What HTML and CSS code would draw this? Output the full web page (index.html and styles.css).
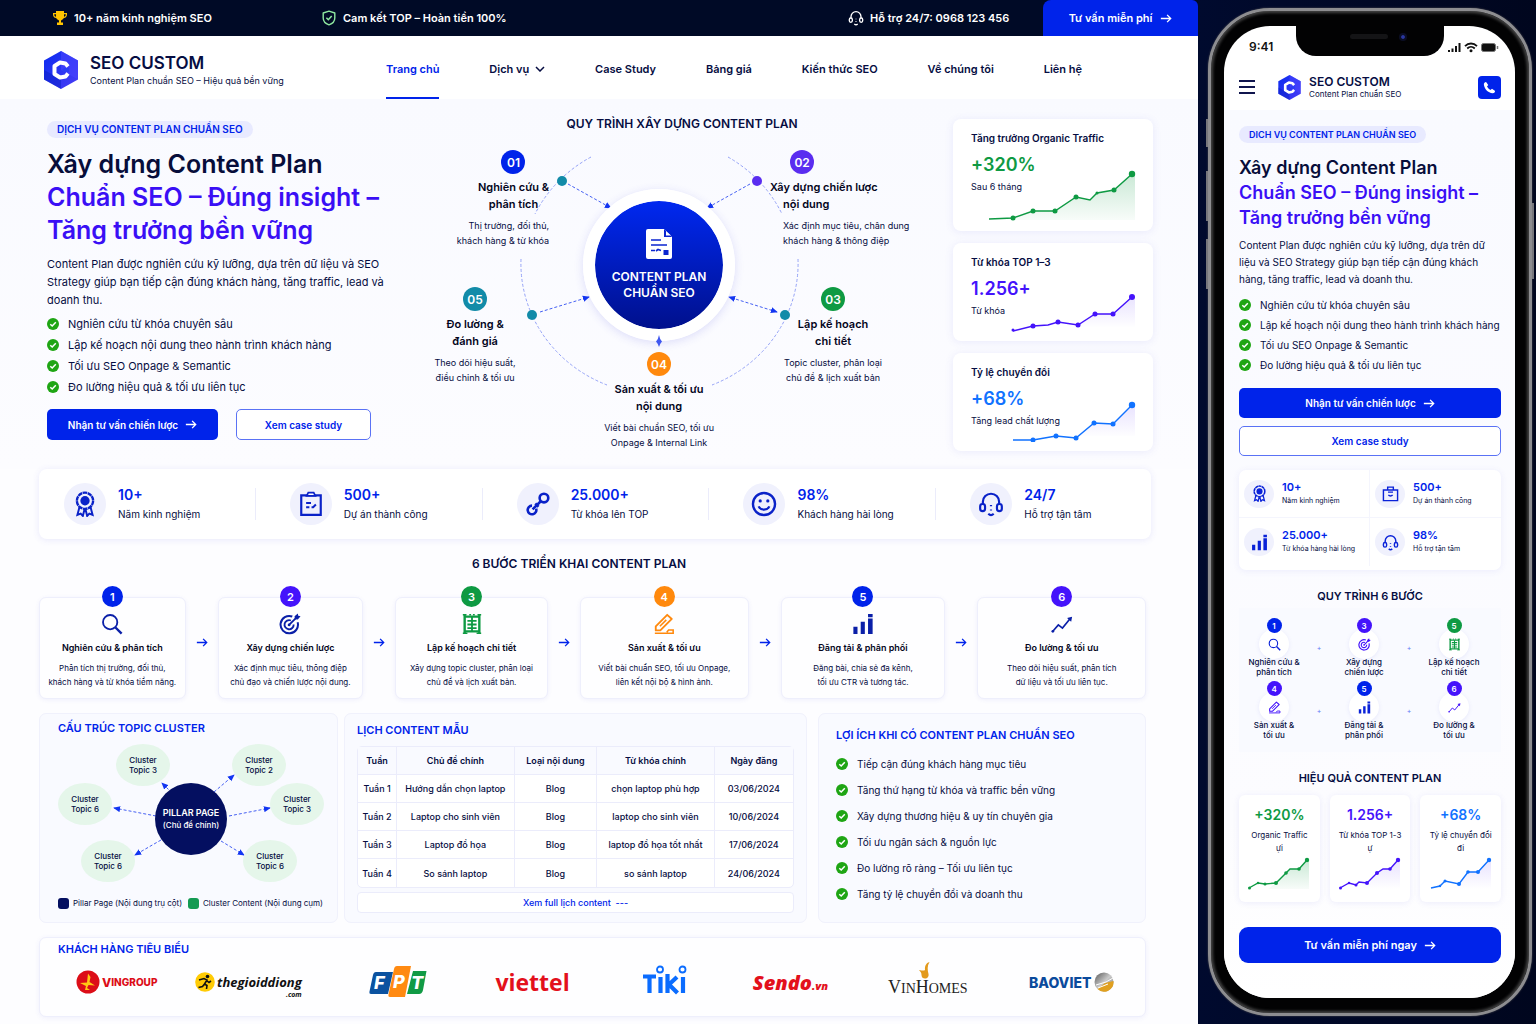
FILE: index.html
```html
<!DOCTYPE html>
<html lang="vi">
<head>
    <meta charset="UTF-8">
    <meta name="viewport" content="width=device-width, initial-scale=1.0">
    <title>SEO Custom - Content Plan chuẩn SEO</title>
    <link rel="stylesheet" href="styles.css">
</head>
<body>
    <!-- Icon sprite -->
    <svg class="sprite" aria-hidden="true">
        <defs>
            <linearGradient id="hex-fill" x1="0" y1="0" x2="1" y2="1">
                <stop offset="0" stop-color="#0a2bf0"/>
                <stop offset="1" stop-color="#4a3df5"/>
            </linearGradient>
            <linearGradient id="fade-green" x1="0" y1="0" x2="0" y2="1">
                <stop offset="0" stop-color="#0e9a43" stop-opacity=".22"/>
                <stop offset="1" stop-color="#0e9a43" stop-opacity=".03"/>
            </linearGradient>
            <linearGradient id="fade-violet" x1="0" y1="0" x2="0" y2="1">
                <stop offset="0" stop-color="#4413fb" stop-opacity=".12"/>
                <stop offset="1" stop-color="#4413fb" stop-opacity="0"/>
            </linearGradient>
            <linearGradient id="globe-fill" x1="0" y1="0" x2="1" y2="1">
                <stop offset="0" stop-color="#555"/>
                <stop offset=".5" stop-color="#c9c9c9"/>
                <stop offset="1" stop-color="#777"/>
            </linearGradient>
            <marker id="tip" viewBox="0 0 8 8" refX="7" refY="4" markerWidth="7" markerHeight="7" markerUnits="userSpaceOnUse" orient="auto-start-reverse">
                <path d="M0 0.5L8 4L0 7.5z" fill="#1235f2"/>
            </marker>
        </defs>
        <symbol id="i-logo" viewBox="0 0 34 38">
            <path d="M17 0L34 9.5V28.5L17 38L0 28.5V9.5z" fill="url(#hex-fill)"/>
            <path d="M17 0L34 9.5V28.5L17 19z" fill="#4b45ff" opacity=".55"/>
            <path d="M17 38L0 28.5V19L17 28z" fill="#0018b8" opacity=".4"/>
            <path d="M24 15.500L21.500 12.500L16 11.500L10.500 15V23L16 26.500L21.500 25.500L24 22.500" fill="none" stroke="#fff" stroke-width="4" stroke-linejoin="round"/>
            <path d="M20 17H25V21H20L18 19z" fill="#2a3df5"/>
        </symbol>
        <symbol id="i-trophy" viewBox="0 0 16 16">
            <path d="M4 1h8v2h3v1.500c0 2-1.200 3.300-3.200 3.600C11 9.500 10 10.200 9 10.400V12.500h2V15H5V12.500h2V10.400C6 10.200 5 9.500 4.200 8.100C2.200 7.800 1 6.500 1 4.500V3h3zM2.200 4.200c0 1.300.6 2.200 1.800 2.500V4.200zM13.800 4.200H12v2.500c1.200-.3 1.800-1.200 1.800-2.500z" fill="#ffc400"/>
        </symbol>
        <symbol id="i-shield" viewBox="0 0 16 16">
            <path d="M8 1.200L13.800 3V8c0 3.500-2.500 5.700-5.800 6.800C4.700 13.700 2.200 11.500 2.200 8V3z" fill="none" stroke="#8ee8a0" stroke-width="1.400" stroke-linejoin="round"/>
            <path d="M5.400 7.800L7.300 9.700L10.700 6" fill="none" stroke="#8ee8a0" stroke-width="1.500"/>
        </symbol>
        <symbol id="i-headset" viewBox="0 0 24 24">
            <path d="M4.500 12V10a7.500 7.500 0 0 1 15 0v2" fill="none" stroke="currentColor" stroke-width="2"/>
            <rect x="2" y="12" width="4.500" height="6.500" rx="2.200" fill="none" stroke="currentColor" stroke-width="2"/>
            <rect x="17.500" y="12" width="4.500" height="6.500" rx="2.200" fill="none" stroke="currentColor" stroke-width="2"/>
            <path d="M9.500 21c1.500 1.400 3.500 1.400 5 0M12 13v1M12 17v1" fill="none" stroke="currentColor" stroke-width="2"/>
        </symbol>
        <symbol id="i-arrow" viewBox="0 0 14 12">
            <path d="M1 6H12.500M8.300 1.800L12.500 6L8.300 10.200" fill="none" stroke="currentColor" stroke-width="1.500"/>
        </symbol>
        <symbol id="i-check" viewBox="0 0 12 12">
            <circle cx="6" cy="6" r="6" fill="#1fa514"/>
            <path d="M3.300 6.200L5.200 8L8.800 4.200" fill="none" stroke="#fff" stroke-width="1.500"/>
        </symbol>
        <symbol id="i-medal" viewBox="0 0 24 24">
            <path d="M7 14.500L5 22l3-1.200L10 23l1.500-6M17 14.500L19 22l-3-1.200L14 23l-1.500-6" fill="none" stroke="currentColor" stroke-width="1.800"/>
            <circle cx="12" cy="9" r="7.500" fill="none" stroke="currentColor" stroke-width="2.200" stroke-dasharray="4.200 .5"/>
            <circle cx="12" cy="9" r="4.300" fill="currentColor"/>
        </symbol>
        <symbol id="i-clipboard" viewBox="0 0 24 24">
            <path d="M3 4H21V22H3z" fill="none" stroke="currentColor" stroke-width="2"/>
            <path d="M8 4.500L9.500 1.500H14.500L16 4.500z" fill="#fff" stroke="currentColor" stroke-width="1.600"/>
            <path d="M7.500 11H12M7.500 15H10.500M12.500 15H14L16.500 12.500" fill="none" stroke="currentColor" stroke-width="1.800"/>
        </symbol>
        <symbol id="i-link" viewBox="0 0 24 24">
            <circle cx="17.500" cy="6.500" r="4" fill="none" stroke="currentColor" stroke-width="2.400"/>
            <path d="M10.300 16.300A4 4 0 1 1 6.500 13.500" fill="none" stroke="currentColor" stroke-width="2.400"/>
            <path d="M7 17L15 9M9.500 11.500l3 3" fill="none" stroke="currentColor" stroke-width="2.400"/>
        </symbol>
        <symbol id="i-smile" viewBox="0 0 24 24">
            <circle cx="12" cy="12" r="10.200" fill="none" stroke="currentColor" stroke-width="2.200"/>
            <circle cx="8.500" cy="9.200" r="1.500" fill="currentColor"/>
            <circle cx="15.500" cy="9.200" r="1.500" fill="currentColor"/>
            <path d="M7 14.200c2 4 8 4 10 0" fill="none" stroke="currentColor" stroke-width="2"/>
        </symbol>
        <symbol id="i-search" viewBox="0 0 24 24">
            <circle cx="10" cy="10" r="7.800" fill="none" stroke="currentColor" stroke-width="2"/>
            <path d="M15.800 15.800L22.500 22.500" stroke="currentColor" stroke-width="2.600"/>
        </symbol>
        <symbol id="i-target" viewBox="0 0 24 24">
            <path d="M14.500 3.800A9.500 9.500 0 1 0 20.300 10" fill="none" stroke="currentColor" stroke-width="2.200"/>
            <path d="M13 8.200A5 5 0 1 0 16 12.500" fill="none" stroke="currentColor" stroke-width="2"/>
            <circle cx="11" cy="13" r="1.500" fill="currentColor"/>
            <path d="M11 13L19 5" stroke="currentColor" stroke-width="2"/>
            <path d="M17 3.500L20.500 0.500L21 3L23.500 3.500L20.500 7L17.300 6.700z" fill="currentColor"/>
        </symbol>
        <symbol id="i-plan" viewBox="0 0 24 24">
            <path d="M4 2V22M20 2V22M4 4H20M4 20H20" fill="none" stroke="currentColor" stroke-width="2.600"/>
            <path d="M7 8.500H11M13 8.500H17M7 12.500H11M13 12.500H17M7 16.500H11M13 16.500H17M12 4V20" fill="none" stroke="currentColor" stroke-width="2"/>
            <path d="M2 2H6M18 2H22M2 22H7M17 22H22M9 2H11M13 2H15" stroke="currentColor" stroke-width="1.600"/>
        </symbol>
        <symbol id="i-pencil" viewBox="0 0 24 24">
            <path d="M3 19V14.500L15.500 2L20.500 6.500L8 19z" fill="none" stroke="currentColor" stroke-width="2" stroke-linejoin="round"/>
            <path d="M2 22H22V18.500H17L15 21M7.500 14.500L14.500 7.500" fill="none" stroke="currentColor" stroke-width="1.700"/>
        </symbol>
        <symbol id="i-bars" viewBox="0 0 24 24">
            <path d="M1.500 15H6V23H1.500zM9.500 9.500H14V23H9.500zM17.500 6H22.500V23H17.500zM17.500 1H22.500V4.500H17.500z" fill="currentColor"/>
        </symbol>
        <symbol id="i-trend" viewBox="0 0 24 24">
            <path d="M2 20L8 13L12.500 16.500L21 6" fill="none" stroke="currentColor" stroke-width="1.800"/>
            <path d="M17.500 5.500L23 4L22 9.500z" fill="currentColor"/>
            <circle cx="2" cy="20" r="1.500" fill="currentColor"/>
        </symbol>
        <symbol id="i-case" viewBox="0 0 24 24">
            <path d="M2 7H22V22H2zM8 7V3H16V7M9 14c1.500 2 4.500 2 6 0M8.500 10H15.500" fill="none" stroke="currentColor" stroke-width="2"/>
        </symbol>
        <symbol id="i-phone" viewBox="0 0 24 24">
            <path d="M6.500 3L10 8L8 10.500C9.300 13 11 14.700 13.500 16L16 14L21 17.500C20.500 20 19 21.200 17 21C9.500 20 4 14.500 3 7C2.800 5 4 3.500 6.500 3z" fill="#fff"/>
        </symbol>
    </svg>

    <!-- Desktop page -->
    <div class="site">
        <div class="topbar">
            <div class="topbar-item"><svg class="icon-16"><use href="#i-trophy"/></svg>10+ năm kinh nghiệm SEO</div>
            <div class="topbar-item"><svg class="icon-16"><use href="#i-shield"/></svg>Cam kết TOP – Hoàn tiền 100%</div>
            <div class="topbar-item"><svg class="icon-16"><use href="#i-headset"/></svg>Hỗ trợ 24/7: 0968 123 456</div>
            <button class="topbar-button" type="button">Tư vấn miễn phí <svg class="icon-arrow"><use href="#i-arrow"/></svg></button>
        </div>

        <header class="header">
            <a class="brand" href="#">
                <svg class="brand-logo"><use href="#i-logo"/></svg>
                <span>
                    <span class="brand-name">SEO CUSTOM</span>
                    <span class="brand-sub">Content Plan chuẩn SEO – Hiệu quả bền vững</span>
                </span>
            </a>
            <nav class="nav">
                <a class="active" href="#">Trang chủ</a>
                <a href="#">Dịch vụ <svg class="icon-chevron" viewBox="0 0 10 6"><path d="M1 1L5 5L9 1" fill="none" stroke="currentColor" stroke-width="1.500"/></svg></a>
                <a href="#">Case Study</a>
                <a href="#">Bảng giá</a>
                <a href="#">Kiến thức SEO</a>
                <a href="#">Về chúng tôi</a>
                <a href="#">Liên hệ</a>
            </nav>
        </header>

        <section class="hero">
            <div class="intro">
                <div class="pill">DỊCH VỤ CONTENT PLAN CHUẨN SEO</div>
                <h1>Xây dựng Content Plan<br><span>Chuẩn SEO – Đúng insight –<br>Tăng trưởng bền vững</span></h1>
                <p>Content Plan được nghiên cứu kỹ lưỡng, dựa trên dữ liệu và SEO<br>Strategy giúp bạn tiếp cận đúng khách hàng, tăng traffic, lead và<br>doanh thu.</p>
                <ul class="checks">
                    <li><svg><use href="#i-check"/></svg>Nghiên cứu từ khóa chuyên sâu</li>
                    <li><svg><use href="#i-check"/></svg>Lập kế hoạch nội dung theo hành trình khách hàng</li>
                    <li><svg><use href="#i-check"/></svg>Tối ưu SEO Onpage &amp; Semantic</li>
                    <li><svg><use href="#i-check"/></svg>Đo lường hiệu quả &amp; tối ưu liên tục</li>
                </ul>
                <div class="buttons">
                    <button class="btn btn-main" type="button">Nhận tư vấn chiến lược <svg class="icon-arrow"><use href="#i-arrow"/></svg></button>
                    <button class="btn btn-line" type="button">Xem case study</button>
                </div>
            </div>

            <!-- Process wheel -->
            <div class="process">
                <h2>QUY TRÌNH XÂY DỰNG CONTENT PLAN</h2>
                <div class="wheel">
                    <svg class="wheel-lines" viewBox="0 0 500 316">
                        <g fill="none" stroke="#94a2f7" stroke-dasharray="3 2">
                            <path d="M159 20A138 131 0 0 0 103 77"/>
                            <path d="M89 122A138 131 0 0 0 175 248"/>
                            <path d="M296 20A138 131 0 0 1 350 77"/>
                            <path d="M366 122A138 131 0 0 1 280 248"/>
                        </g>
                        <g fill="none" stroke="#4560f3" stroke-dasharray="3 2">
                            <path d="M136 47L179 71" marker-end="url(#tip)"/>
                            <path d="M318 47L275 71" marker-end="url(#tip)"/>
                            <path d="M108 175L157 160" marker-end="url(#tip)"/>
                            <path d="M345 175L297 160" marker-start="url(#tip)" marker-end="url(#tip)"/>
                        </g>
                        <circle cx="130" cy="44" r="5" fill="#128ba8"/>
                        <circle cx="325" cy="44" r="5" fill="#5a2df0"/>
                        <circle cx="353" cy="178" r="5" fill="#128ba8"/>
                        <circle cx="100" cy="178" r="5" fill="#128ba8"/>
                    </svg>
                    <div class="wheel-core">
                        <svg class="core-icon" viewBox="0 0 26 30">
                            <path d="M0 2a2 2 0 0 1 2-2H18L26 8V28a2 2 0 0 1-2 2H2a2 2 0 0 1-2-2z" fill="#fff"/>
                            <path d="M18 0V8H26z" fill="#0a25d0"/>
                            <path d="M20 2V6.500H25z" fill="#fff"/>
                            <path d="M5 11H15M5 16H21M5 21.500H9M10 22L12 20.500L15 21.500" fill="none" stroke="#0a25d0" stroke-width="1.600"/>
                            <rect x="17.500" y="21" width="5" height="5" fill="#0a25d0"/>
                        </svg>
                        CONTENT PLAN<br>CHUẨN SEO
                    </div>
                    <svg class="wheel-pin" viewBox="0 0 6 12"><path d="M3 0L4.200 4L6 6.500L4.200 9L3 12L1.800 9L0 6.500L1.800 4z" fill="#3f57f0"/></svg>
                    <div class="node node-1">
                        <div class="node-head"><b class="num blue">01</b><h3>Nghiên cứu &amp;<br>phân tích</h3></div>
                        <p>Thị trường, đối thủ,<br>khách hàng &amp; từ khóa</p>
                    </div>
                    <div class="node node-2">
                        <b class="num violet">02</b><h3>Xây dựng chiến lược<br>nội dung</h3>
                        <p>Xác định mục tiêu, chân dung<br>khách hàng &amp; thông điệp</p>
                    </div>
                    <div class="node node-3">
                        <b class="num green">03</b><h3>Lập kế hoạch<br>chi tiết</h3>
                        <p>Topic cluster, phân loại<br>chủ đề &amp; lịch xuất bản</p>
                    </div>
                    <div class="node node-4">
                        <b class="num orange">04</b><h3>Sản xuất &amp; tối ưu<br>nội dung</h3>
                        <p>Viết bài chuẩn SEO, tối ưu<br>Onpage &amp; Internal Link</p>
                    </div>
                    <div class="node node-5">
                        <b class="num teal">05</b><h3>Đo lường &amp;<br>đánh giá</h3>
                        <p>Theo dõi hiệu suất,<br>điều chỉnh &amp; tối ưu</p>
                    </div>
                </div>
            </div>

            <!-- Result cards -->
            <div class="results">
                <div class="result result-tall">
                    <h3>Tăng trưởng Organic Traffic</h3>
                    <strong class="text-green">+320%</strong>
                    <p>Sau 6 tháng</p>
                    <svg class="chart text-green" viewBox="0 0 150 52">
                        <path d="M25 48L45 41H67L88 27L102 30L109 23L126 20L144 4H147V50H25z" fill="url(#fade-green)"/>
                        <polyline points="1,49 25,48 45,41 67,41 88,27 102,30 109,23 126,20 144,4"/>
                        <circle cx="25" cy="48" r="2.500"/><circle cx="45" cy="41" r="2.500"/><circle cx="67" cy="41" r="2.500"/><circle cx="88" cy="27" r="2.500"/><circle cx="109" cy="23" r="1.500"/><circle cx="126" cy="20" r="2.500"/><circle cx="144" cy="4" r="3.200"/>
                    </svg>
                </div>
                <div class="result">
                    <h3>Từ khóa TOP 1–3</h3>
                    <strong class="text-violet">1.256+</strong>
                    <p>Từ khóa</p>
                    <svg class="chart text-violet" viewBox="0 0 150 52">
                        <path d="M90 45L107 34H125L144 17H147V48H90z" fill="url(#fade-violet)"/>
                        <polyline points="25,51 45,46 60,45 70,42 90,45 107,34 125,34 144,17"/>
                        <circle cx="25" cy="50" r="1.500"/><circle cx="45" cy="46" r="2.500"/><circle cx="70" cy="42" r="2.500"/><circle cx="90" cy="45" r="2.500"/><circle cx="107" cy="34" r="2.500"/><circle cx="125" cy="34" r="2.500"/><circle cx="144" cy="17" r="3"/>
                    </svg>
                </div>
                <div class="result">
                    <h3>Tỷ lệ chuyển đổi</h3>
                    <strong class="text-sky">+68%</strong>
                    <p>Tăng lead chất lượng</p>
                    <svg class="chart text-sky" viewBox="0 0 150 52">
                        <path d="M88 48L106 33L125 34L144 15H147V46H88z" fill="url(#fade-violet)"/>
                        <polyline points="25,50 45,50 68,46 88,48 106,33 125,34 144,15"/>
                        <circle cx="45" cy="50" r="2.500"/><circle cx="68" cy="46" r="2.500"/><circle cx="88" cy="48" r="2.500"/><circle cx="106" cy="33" r="2.500"/><circle cx="125" cy="34" r="2.500"/><circle cx="144" cy="15" r="3.200"/>
                    </svg>
                </div>
            </div>
        </section>

        <main class="content">
            <!-- Stats -->
            <div class="stats">
                <div class="stat"><span class="stat-icon"><svg><use href="#i-medal"/></svg></span><div><strong>10+</strong><p>Năm kinh nghiệm</p></div></div>
                <div class="stat"><span class="stat-icon"><svg><use href="#i-clipboard"/></svg></span><div><strong>500+</strong><p>Dự án thành công</p></div></div>
                <div class="stat"><span class="stat-icon"><svg><use href="#i-link"/></svg></span><div><strong>25.000+</strong><p>Từ khóa lên TOP</p></div></div>
                <div class="stat"><span class="stat-icon"><svg><use href="#i-smile"/></svg></span><div><strong>98%</strong><p>Khách hàng hài lòng</p></div></div>
                <div class="stat"><span class="stat-icon"><svg><use href="#i-headset"/></svg></span><div><strong>24/7</strong><p>Hỗ trợ tận tâm</p></div></div>
            </div>

            <!-- Steps -->
            <h2 class="steps-title">6 BƯỚC TRIỂN KHAI CONTENT PLAN</h2>
            <div class="steps">
                <div class="step">
                    <b class="num blue">1</b><svg class="step-icon"><use href="#i-search"/></svg>
                    <h3>Nghiên cứu &amp; phân tích</h3>
                    <p>Phân tích thị trường, đối thủ,<br>khách hàng và từ khóa tiềm năng.</p>
                </div>
                <svg class="icon-arrow"><use href="#i-arrow"/></svg>
                <div class="step">
                    <b class="num purple">2</b><svg class="step-icon"><use href="#i-target"/></svg>
                    <h3>Xây dựng chiến lược</h3>
                    <p>Xác định mục tiêu, thông điệp<br>chủ đạo và chiến lược nội dung.</p>
                </div>
                <svg class="icon-arrow"><use href="#i-arrow"/></svg>
                <div class="step">
                    <b class="num green">3</b><svg class="step-icon text-green"><use href="#i-plan"/></svg>
                    <h3>Lập kế hoạch chi tiết</h3>
                    <p>Xây dựng topic cluster, phân loại<br>chủ đề và lịch xuất bản.</p>
                </div>
                <svg class="icon-arrow"><use href="#i-arrow"/></svg>
                <div class="step">
                    <b class="num orange">4</b><svg class="step-icon text-orange"><use href="#i-pencil"/></svg>
                    <h3>Sản xuất &amp; tối ưu</h3>
                    <p>Viết bài chuẩn SEO, tối ưu Onpage,<br>liên kết nội bộ &amp; hình ảnh.</p>
                </div>
                <svg class="icon-arrow"><use href="#i-arrow"/></svg>
                <div class="step">
                    <b class="num blue">5</b><svg class="step-icon"><use href="#i-bars"/></svg>
                    <h3>Đăng tải &amp; phân phối</h3>
                    <p>Đăng bài, chia sẻ đa kênh,<br>tối ưu CTR và tương tác.</p>
                </div>
                <svg class="icon-arrow"><use href="#i-arrow"/></svg>
                <div class="step">
                    <b class="num purple">6</b><svg class="step-icon"><use href="#i-trend"/></svg>
                    <h3>Đo lường &amp; tối ưu</h3>
                    <p>Theo dõi hiệu suất, phân tích<br>dữ liệu và tối ưu liên tục.</p>
                </div>
            </div>

            <div class="panels">
                <!-- Topic cluster -->
                <section class="panel panel-cluster">
                    <h2>CẤU TRÚC TOPIC CLUSTER</h2>
                    <div class="cluster">
                        <svg class="cluster-lines" viewBox="0 0 299 152">
                            <g fill="none" stroke="#4560f3" stroke-dasharray="3 2">
                                <path d="M132 56L122 46" marker-end="url(#tip)"/>
                                <path d="M174 55L194 38" marker-end="url(#tip)"/>
                                <path d="M116 79L74 71" marker-end="url(#tip)"/>
                                <path d="M189 79L230 71" marker-end="url(#tip)"/>
                                <path d="M121 103L95 118" marker-end="url(#tip)"/>
                                <path d="M181 104L204 118" marker-end="url(#tip)"/>
                            </g>
                        </svg>
                        <div class="topic topic-1">Cluster<br>Topic 3</div>
                        <div class="topic topic-2">Cluster<br>Topic 2</div>
                        <div class="topic topic-3">Cluster<br>Topic 6</div>
                        <div class="topic topic-4">Cluster<br>Topic 3</div>
                        <div class="topic topic-5">Cluster<br>Topic 6</div>
                        <div class="topic topic-6">Cluster<br>Topic 6</div>
                        <div class="pillar"><b>PILLAR PAGE</b>(Chủ đề chính)</div>
                    </div>
                    <div class="legend">
                        <span><i class="swatch swatch-navy"></i>Pillar Page (Nội dung trụ cột)</span>
                        <span><i class="swatch swatch-green"></i>Cluster Content (Nội dung cụm)</span>
                    </div>
                </section>

                <!-- Calendar -->
                <section class="panel panel-calendar">
                    <h2>LỊCH CONTENT MẪU</h2>
                    <table>
                        <colgroup><col class="col-week"><col class="col-topic"><col class="col-type"><col class="col-key"><col class="col-date"></colgroup>
                        <thead>
                            <tr><th>Tuần</th><th>Chủ đề chính</th><th>Loại nội dung</th><th>Từ khóa chính</th><th>Ngày đăng</th></tr>
                        </thead>
                        <tbody>
                            <tr><td>Tuần 1</td><td>Hướng dẫn chọn laptop</td><td>Blog</td><td>chọn laptop phù hợp</td><td>03/06/2024</td></tr>
                            <tr><td>Tuần 2</td><td>Laptop cho sinh viên</td><td>Blog</td><td>laptop cho sinh viên</td><td>10/06/2024</td></tr>
                            <tr><td>Tuần 3</td><td>Laptop đồ họa</td><td>Blog</td><td>laptop đồ họa tốt nhất</td><td>17/06/2024</td></tr>
                            <tr><td>Tuần 4</td><td>So sánh laptop</td><td>Blog</td><td>so sánh laptop</td><td>24/06/2024</td></tr>
                        </tbody>
                    </table>
                    <a class="calendar-more" href="#">Xem full lịch content&nbsp; ---</a>
                </section>

                <!-- Benefits -->
                <section class="panel panel-benefits">
                    <h2>LỢI ÍCH KHI CÓ CONTENT PLAN CHUẨN SEO</h2>
                    <ul class="checks">
                        <li><svg><use href="#i-check"/></svg>Tiếp cận đúng khách hàng mục tiêu</li>
                        <li><svg><use href="#i-check"/></svg>Tăng thứ hạng từ khóa và traffic bền vững</li>
                        <li><svg><use href="#i-check"/></svg>Xây dựng thương hiệu &amp; uy tín chuyên gia</li>
                        <li><svg><use href="#i-check"/></svg>Tối ưu ngân sách &amp; nguồn lực</li>
                        <li><svg><use href="#i-check"/></svg>Đo lường rõ ràng – Tối ưu liên tục</li>
                        <li><svg><use href="#i-check"/></svg>Tăng tỷ lệ chuyển đổi và doanh thu</li>
                    </ul>
                </section>
            </div>

            <!-- Clients -->
            <section class="clients">
                <h2>KHÁCH HÀNG TIÊU BIỂU</h2>
                <div class="client-list">
                    <div class="client vingroup">
                        <svg class="client-mark mark-24" viewBox="0 0 24 24">
                            <circle cx="12" cy="12" r="11.500" fill="#dc0d18"/>
                            <path d="M12 3.500L14.500 7L13.500 12L19 15.500L12.500 15L11 18L14 20H9L10 16L4 13L11 12.500z" fill="#ffc814"/>
                        </svg>
                        <span class="big-cap">V</span>INGROUP
                    </div>
                    <div class="client tgdd">
                        <svg class="client-mark mark-20" viewBox="0 0 20 20">
                            <circle cx="10" cy="10" r="9.800" fill="#ffcb05"/>
                            <circle cx="12.500" cy="4.500" r="1.800" fill="#111"/>
                            <path d="M4 8L9 6.500L12 8L9.500 12L12 13.500L11.500 17M9.500 12L7.500 14.500L3.500 15.500M11.500 8.500L14 10.500L16 9" fill="none" stroke="#111" stroke-width="1.600"/>
                        </svg>
                        <span>thegioiddiong<small>.com</small></span>
                    </div>
                    <div class="client">
                        <svg class="fpt" viewBox="0 0 58 32">
                            <path d="M7 6H24L19 28H2q-2 0-1.500-2.500L4 9q.7-3 3-3z" fill="#0b52a0"/>
                            <path d="M25 3q.6-3 3-3H42L36 31H21q-2 0-1.500-2.500z" fill="#ff8a12"/>
                            <path d="M44 5H57.500L54 24q-.8 4-4 4H38z" fill="#119a45"/>
                            <text x="5" y="23">F</text><text x="24" y="22">P</text><text x="42" y="23">T</text>
                        </svg>
                    </div>
                    <div class="client viettel">viettel</div>
                    <div class="client tiki">
                        <svg viewBox="0 0 44 30">
                            <path d="M0 11.500H13M6.500 11.500V28M17.500 12V28M24.500 9V28M34 12L26 19.500L34.500 28M40 12V28" fill="none" stroke="#0a6cff" stroke-width="4.200"/>
                            <circle cx="17" cy="4.500" r="3" fill="none" stroke="#0a6cff" stroke-width="1.800"/>
                            <circle cx="39.500" cy="4.500" r="3" fill="none" stroke="#0a6cff" stroke-width="1.800"/>
                        </svg>
                    </div>
                    <div class="client sendo">Sendo<small>.vn</small></div>
                    <div class="client vinhomes">
                        <svg viewBox="0 0 12 17"><path d="M11.500 0C8 1 6.500 4 7 8C5.500 9 4.500 8.500 1 8C2 9.500 3.500 10 3.500 13C3.500 15.500 5 16.500 7 16.500C9.500 16.500 11 14.500 10.500 12C9.500 8 9 4 11.500 0z" fill="#e39a1c"/></svg>
                        <span><span class="big-cap">V</span>IN<span class="big-cap">H</span>OMES</span>
                    </div>
                    <div class="client baoviet">
                        BAOVIET
                        <svg class="mark-20" viewBox="0 0 20 20">
                            <circle cx="10" cy="10" r="9.500" fill="url(#globe-fill)"/>
                            <path d="M19.500 9A9.500 9.500 0 0 1 3.500 17L11 11z" fill="#e0a020"/>
                            <path d="M2 13L12 10L19 6M4 16L14 12" stroke="#fff" fill="none"/>
                        </svg>
                    </div>
                </div>
            </section>
        </main>
    </div>

    <!-- Mobile preview -->
    <aside class="mobile">
        <div class="phone">
            <i class="side-key key-1"></i><i class="side-key key-2"></i><i class="side-key key-3"></i><i class="side-key key-4"></i>
            <div class="screen">
                <div class="notch"></div>
                <div class="status">
                    <span>9:41</span>
                    <svg viewBox="0 0 52 12">
                        <path d="M1 9H3V11H1zM4.500 7.500H6.500V11H4.500zM8 5H10V11H8zM11.500 2H13.500V11H11.500z" fill="#111"/>
                        <path d="M18 5.200c3.500-3.600 8.500-3.600 12 0M20.200 7.500c2.200-2.200 5.400-2.200 7.600 0" fill="none" stroke="#111" stroke-width="1.800"/>
                        <circle cx="24" cy="9.800" r="1.500" fill="#111"/>
                        <rect x="34.500" y="2.500" width="14" height="8" rx="2" fill="#111" stroke="#777"/>
                        <path d="M50.500 5V8" stroke="#777" stroke-width="1.500"/>
                    </svg>
                </div>
                <header class="m-header">
                    <button class="m-menu" type="button" aria-label="Menu"><i></i><i></i><i></i></button>
                    <svg class="m-logo"><use href="#i-logo"/></svg>
                    <div>
                        <span class="m-name">SEO CUSTOM</span>
                        <span class="m-sub">Content Plan chuẩn SEO</span>
                    </div>
                    <button class="m-call" type="button" aria-label="Gọi"><svg><use href="#i-phone"/></svg></button>
                </header>
                <div class="m-body">
                    <div class="pill">DICH VỤ CONTENT PLAN CHUẨN SEO</div>
                    <h1>Xây dựng Content Plan<br><span>Chuẩn SEO – Đúng insight –<br>Tăng trưởng bền vững</span></h1>
                    <p>Content Plan được nghiên cứu kỹ lưỡng, dựa trên dữ<br>liệu và SEO Strategy giúp bạn tiếp cận đúng khách<br>hàng, tăng traffic, lead và doanh thu.</p>
                    <ul class="checks">
                        <li><svg><use href="#i-check"/></svg>Nghiên cứu từ khóa chuyên sâu</li>
                        <li><svg><use href="#i-check"/></svg>Lập kế hoạch nội dung theo hành trình khách hàng</li>
                        <li><svg><use href="#i-check"/></svg>Tối ưu SEO Onpage &amp; Semantic</li>
                        <li><svg><use href="#i-check"/></svg>Đo lường hiệu quả &amp; tối ưu liên tục</li>
                    </ul>
                    <div class="m-buttons">
                        <button class="btn btn-main" type="button">Nhận tư vấn chiến lược <svg class="icon-arrow"><use href="#i-arrow"/></svg></button>
                        <button class="btn btn-line" type="button">Xem case study</button>
                    </div>

                    <div class="m-stats">
                        <div class="m-stat"><span class="m-stat-icon"><svg><use href="#i-medal"/></svg></span><div><strong>10+</strong><p>Năm kinh nghiệm</p></div></div>
                        <div class="m-stat"><span class="m-stat-icon"><svg><use href="#i-case"/></svg></span><div><strong>500+</strong><p>Dự án thành công</p></div></div>
                        <div class="m-stat"><span class="m-stat-icon"><svg><use href="#i-bars"/></svg></span><div><strong>25.000+</strong><p>Từ khóa hàng hài lòng</p></div></div>
                        <div class="m-stat"><span class="m-stat-icon"><svg><use href="#i-headset"/></svg></span><div><strong>98%</strong><p>Hỗ trợ tận tâm</p></div></div>
                    </div>

                    <h2>QUY TRÌNH 6 BƯỚC</h2>
                    <div class="m-steps">
                        <div class="m-step"><b class="num blue">1</b><span><svg><use href="#i-search"/></svg></span>Nghiên cứu &amp;<br>phân tích</div>
                        <i>+</i>
                        <div class="m-step"><b class="num purple">3</b><span class="text-violet"><svg><use href="#i-target"/></svg></span>Xây dựng<br>chiến lược</div>
                        <i>+</i>
                        <div class="m-step"><b class="num green">5</b><span class="text-green"><svg><use href="#i-plan"/></svg></span>Lập kế hoạch<br>chi tiết</div>
                        <div class="m-step"><b class="num purple">4</b><span class="text-violet"><svg><use href="#i-pencil"/></svg></span>Sản xuất &amp;<br>tối ưu</div>
                        <i>+</i>
                        <div class="m-step"><b class="num blue">5</b><span><svg><use href="#i-bars"/></svg></span>Đăng tải &amp;<br>phân phối</div>
                        <i>+</i>
                        <div class="m-step"><b class="num purple">6</b><span class="text-violet"><svg><use href="#i-trend"/></svg></span>Đo lường &amp;<br>tối ưu</div>
                    </div>

                    <h2>HIỆU QUẢ CONTENT PLAN</h2>
                    <div class="m-results">
                        <div class="m-result">
                            <strong class="text-green">+320%</strong>
                            <p>Organic Traffic<br>ựi</p>
                            <svg class="m-chart text-green" viewBox="0 0 62 34">
                                <path d="M28 26L38 16L42 12H51L59 3H61V32H20z" fill="url(#fade-green)"/>
                                <polyline points="1,31 10,26 17,27 28,26 38,16 42,12 51,12 59,3"/>
                                <circle cx="1.500" cy="31" r="1.500"/><circle cx="10" cy="26" r="1.200"/><circle cx="17" cy="27" r="1.500"/><circle cx="28" cy="26" r="2"/><circle cx="38" cy="16" r="1.800"/><circle cx="51" cy="12" r="1.800"/><circle cx="59" cy="3" r="2.200"/>
                            </svg>
                        </div>
                        <div class="m-result">
                            <strong class="text-violet">1.256+</strong>
                            <p>Từ khóa TOP 1-3<br>ự</p>
                            <svg class="m-chart text-violet" viewBox="0 0 62 34">
                                <path d="M28 26L38 16L42 12H51L59 3H61V32H20z" fill="url(#fade-violet)"/>
                                <polyline points="1,31 10,26 17,28 20,25 28,26 38,16 44,12 51,12 59,3"/>
                                <circle cx="1.500" cy="31" r="1.500"/><circle cx="10" cy="26" r="1.200"/><circle cx="17" cy="28" r="1.500"/><circle cx="28" cy="26" r="2"/><circle cx="38" cy="16" r="2"/><circle cx="51" cy="12" r="1.800"/><circle cx="59" cy="3" r="2.200"/>
                            </svg>
                        </div>
                        <div class="m-result">
                            <strong class="text-sky">+68%</strong>
                            <p>Tỷ lệ chuyển đổi<br>đi</p>
                            <svg class="m-chart text-sky" viewBox="0 0 62 34">
                                <path d="M28 27L38 15H48L59 3H61V32H20z" fill="url(#fade-violet)"/>
                                <polyline points="1,31 10,29 15,24 29,27 38,15 48,15 59,3"/>
                                <circle cx="10" cy="29" r="1.200"/><circle cx="15" cy="24" r="1.500"/><circle cx="29" cy="27" r="2"/><circle cx="38" cy="15" r="1.800"/><circle cx="48" cy="15" r="2"/><circle cx="59" cy="3" r="2.200"/>
                            </svg>
                        </div>
                    </div>
                    <button class="btn btn-main m-cta" type="button">Tư vấn miễn phí ngay <svg class="icon-arrow"><use href="#i-arrow"/></svg></button>
                </div>
            </div>
        </div>
    </aside>
</body>
</html>
```
FILE: styles.css
```css
:root {
    --navy: #060d42;
    --blue: #0023ea;
    --green: #0e9a43;
    --violet: #4413fb;
    --line: #ebecfb;
}

* {
    box-sizing: border-box;
}

body {
    margin: 0;
    font-family: Inter, 'Open Sans', sans-serif;
    font-size: 11px;
    color: var(--navy);
    background: #000a2e;
    display: flex;
    min-height: 100vh;
}

h1, h2, h3, p, ul {
    margin: 0;
    padding: 0;
}

a {
    color: inherit;
    text-decoration: none;
}

button {
    font-family: inherit;
    border: none;
    cursor: pointer;
}

.sprite {
    position: absolute;
    width: 0;
    height: 0;
}

.blue { background: var(--blue); }
.violet { background: #5a2df0; }
.purple { background: var(--violet); }
.green { background: var(--green); }
.orange { background: #ff890d; }
.teal { background: #128ba8; }

.text-green { color: var(--green); }
.text-violet { color: var(--violet); }
.text-sky { color: #1172ff; }
.text-orange { color: #ff890d; }

.icon-16 {
    width: 16px;
    height: 16px;
}

.icon-arrow {
    width: 12px;
    height: 11px;
}

.icon-chevron {
    width: 10px;
    height: 6px;
}

.num {
    display: flex;
    align-items: center;
    justify-content: center;
    border-radius: 50%;
    color: #fff;
    font-weight: 600;
}

/* Desktop page */
.site {
    width: 78%;
    background: #fdfdff;
}

.topbar {
    height: 36px;
    background: #000a26;
    color: #fff;
    display: grid;
    grid-template-columns: 269fr 527fr 195fr 155px;
    padding-left: 52px;
    font-weight: 600;
}

.topbar-item {
    display: flex;
    align-items: center;
    gap: 6px;
}

.topbar-button {
    background: var(--blue);
    color: #fff;
    font-size: 11px;
    font-weight: 600;
    border-radius: 8px 6px 0 0;
    display: flex;
    align-items: center;
    justify-content: center;
    gap: 8px;
}

.header {
    height: 63px;
    background: #fff;
    padding: 0 116px 0 44px;
    display: flex;
}

.brand {
    flex: 0 0 342px;
    padding-top: 5px;
    display: flex;
    align-items: center;
    gap: 12px;
}

.brand-logo {
    width: 34px;
    height: 38px;
}

.brand-name {
    display: block;
    font-size: 17px;
    line-height: 20px;
    font-weight: 600;
}

.brand-sub {
    display: block;
    font-size: 9px;
    line-height: 15px;
}

.nav {
    flex: 1;
    display: flex;
    justify-content: space-between;
    font-weight: 600;
}

.nav a {
    display: flex;
    align-items: center;
    gap: 6px;
    padding-top: 5px;
    border-bottom: 2px solid transparent;
}

.nav a.active {
    color: var(--blue);
    border-color: var(--blue);
}

/* Hero */
.hero {
    display: grid;
    grid-template-columns: minmax(0, 1fr) 500px 200px;
    gap: 21px;
    padding: 0 45px 16px 47px;
    background: linear-gradient(#f9faff, #fcfcff);
}

.intro {
    padding-top: 22px;
    white-space: nowrap;
}

.pill {
    display: inline-block;
    padding: 0 10px;
    border-radius: 9px;
    background: #e8eaff;
    color: var(--blue);
    font-size: 10px;
    line-height: 17px;
    font-weight: 600;
    white-space: nowrap;
}

h1 {
    color: #070d3a;
    font-weight: 600;
}

h1 span {
    color: #3a0ff5;
}

.intro h1 {
    margin-top: 10px;
    font-size: 25px;
    line-height: 33px;
}

.intro p {
    margin-top: 8px;
    line-height: 18px;
}

.checks {
    list-style: none;
}

.checks li {
    display: flex;
    align-items: center;
    gap: 9px;
    height: 21px;
    white-space: nowrap;
}

.checks svg {
    width: 12px;
    height: 12px;
}

.intro .checks {
    margin-top: 4px;
}

.buttons {
    display: flex;
    gap: 18px;
    margin-top: 12px;
}

.btn {
    height: 31px;
    border-radius: 5px;
    font-size: 10px;
    font-weight: 600;
    display: flex;
    align-items: center;
    justify-content: center;
    gap: 7px;
}

.btn-main {
    width: 171px;
    background: var(--blue);
    color: #fff;
}

.btn-line {
    width: 135px;
    background: #fff;
    border: 1px solid #5a72f5;
    color: var(--blue);
}

/* Process wheel */
.process {
    padding-top: 17px;
}

.process h2 {
    font-size: 12px;
    line-height: 16px;
    font-weight: 600;
    text-align: center;
}

.wheel {
    position: relative;
    height: 316px;
    margin-top: 5px;
}

.wheel-lines {
    position: absolute;
    left: 0;
    top: 0;
    width: 500px;
    height: 316px;
}

.wheel-core {
    position: absolute;
    left: 151px;
    top: 52px;
    width: 152px;
    height: 152px;
    border: 12px solid #fff;
    border-radius: 50%;
    background: linear-gradient(#0028f0, #00108c) padding-box;
    box-shadow: 0 2px 10px rgba(60, 60, 220, 0.16);
    color: #fff;
    font-size: 12px;
    line-height: 16px;
    font-weight: 600;
    text-align: center;
    white-space: nowrap;
    padding-top: 28px;
}

.core-icon {
    display: block;
    width: 26px;
    height: 30px;
    margin: 0 auto 10px;
}

.wheel-pin {
    position: absolute;
    left: 224px;
    top: 198px;
    width: 6px;
    height: 12px;
}

.node {
    position: absolute;
    display: flex;
    flex-direction: column;
    align-items: center;
    text-align: center;
    white-space: nowrap;
}

.node .num {
    width: 24px;
    height: 24px;
    font-size: 12px;
}

.node h3 {
    margin-top: 5px;
    color: #03051c;
    font-size: 11px;
    line-height: 17px;
    font-weight: 600;
}

.node p {
    margin-top: 5px;
    font-size: 9px;
    line-height: 15px;
}

.node-head {
    display: flex;
    flex-direction: column;
    align-items: center;
}

.node-1 {
    right: 383px;
    top: 13px;
    align-items: flex-end;
    text-align: right;
}

.node-1 h3 {
    text-align: center;
}

.node-2 {
    left: 338px;
    top: 13px;
    align-items: flex-start;
    text-align: left;
}

.node-2 .num {
    margin-left: 20px;
}

.node-2 h3 {
    padding-left: 13px;
    text-indent: -13px;
}

.node-2 p {
    padding-left: 13px;
}

.node-3 {
    left: 346px;
    top: 150px;
    width: 110px;
}

.node-4 {
    left: 162px;
    top: 215px;
    width: 130px;
}

.node-5 {
    left: -2px;
    top: 150px;
    width: 90px;
}

/* Result cards */
.results {
    padding-top: 20px;
    display: flex;
    flex-direction: column;
    gap: 12px;
}

.result {
    position: relative;
    height: 98px;
    padding: 11px 18px;
    background: #fff;
    border-radius: 8px;
    box-shadow: 0 1px 8px rgba(80, 80, 220, 0.1);
    white-space: nowrap;
}

.result-tall {
    height: 112px;
}

.result h3 {
    font-size: 10px;
    line-height: 16px;
    font-weight: 600;
}

.result strong {
    display: block;
    margin-top: 7px;
    font-size: 18px;
    line-height: 24px;
    font-weight: 600;
}

.result p {
    margin-top: 2px;
    font-size: 9px;
    line-height: 16px;
}

.chart {
    position: absolute;
    right: 15px;
    bottom: 9px;
    width: 150px;
    height: 52px;
}

.chart polyline,
.m-chart polyline {
    fill: none;
    stroke: currentColor;
    stroke-width: 1.4;
}

.chart circle,
.m-chart circle {
    fill: currentColor;
}

/* Content */
.content {
    padding: 0 52px 8px 39px;
}

.content h2 {
    font-size: 11px;
    line-height: 16px;
    font-weight: 600;
    white-space: nowrap;
}

.stats {
    height: 70px;
    margin-right: -5px;
    background: #fff;
    border-radius: 8px;
    box-shadow: 0 1px 7px rgba(80, 80, 220, 0.12);
    display: grid;
    grid-template-columns: 217fr 227fr 227fr 227fr 215fr;
    align-items: center;
}

.stat {
    height: 32px;
    padding-left: 34px;
    border-right: 1px solid var(--line);
    display: flex;
    align-items: center;
    gap: 12px;
}

.stat:first-child {
    padding-left: 25px;
}

.stat:last-child {
    border-right: none;
}

.stat-icon {
    width: 42px;
    height: 42px;
    border-radius: 50%;
    background: #f0f1fd;
    color: #0a22c8;
    display: flex;
    align-items: center;
    justify-content: center;
}

.stat-icon svg {
    width: 26px;
    height: 26px;
}

.stat strong {
    color: var(--blue);
    font-size: 14px;
    line-height: 20px;
    font-weight: 600;
}

.stat p {
    font-size: 10px;
    line-height: 18px;
}

/* Steps */
.content .steps-title {
    margin: 17px 27px 25px 0;
    font-size: 12px;
    text-align: center;
}

.steps {
    display: grid;
    grid-template-columns: 146fr 32px 145fr 32px 152fr 32px 168fr 32px 164fr 32px 168fr;
    align-items: center;
}

.steps .icon-arrow {
    justify-self: center;
    margin-top: -12px;
    color: var(--blue);
}

.step {
    min-width: 0;
    padding-bottom: 9px;
    background: #fefeff;
    border: 1px solid #eeeffc;
    border-radius: 7px;
    box-shadow: 0 1px 4px rgba(80, 80, 220, 0.08);
    display: flex;
    flex-direction: column;
    align-items: center;
    text-align: center;
    white-space: nowrap;
}

.step .num {
    width: 21px;
    height: 21px;
    margin-top: -12px;
    font-size: 11px;
}

.step-icon {
    width: 22px;
    height: 22px;
    margin: 6px 0;
    color: #0a1fa8;
}

.step-icon.text-green { color: var(--green); }
.step-icon.text-orange { color: #ff890d; }

.step h3 {
    font-size: 9px;
    line-height: 14px;
    font-weight: 600;
    color: #03051c;
}

.step p {
    margin-top: 6px;
    font-size: 8px;
    line-height: 14px;
}

/* Panels */
.panels {
    margin-top: 14px;
    display: grid;
    grid-template-columns: minmax(0, 299fr) minmax(0, 475fr) minmax(0, 333fr);
    align-items: stretch;
}

.panel {
    min-height: 210px;
    background: #f9faff;
    border: 1px solid #f0f1fc;
    border-radius: 7px;
}

.panel h2,
.clients h2 {
    color: var(--blue);
}

.panel-cluster {
    padding: 6px 0 0;
}

.panel-cluster h2 {
    padding-left: 18px;
}

.cluster {
    position: relative;
    height: 152px;
    margin-top: 1px;
    font-size: 8px;
    line-height: 10px;
    font-weight: 500;
}

.cluster-lines {
    position: absolute;
    left: 0;
    top: 0;
    width: 299px;
    height: 152px;
}

.topic {
    position: absolute;
    width: 54px;
    height: 42px;
    border-radius: 50%;
    background: #e5f6ea;
    display: flex;
    align-items: center;
    justify-content: center;
    text-align: center;
}

.topic-1 { left: 76px; top: 7px; }
.topic-2 { left: 192px; top: 7px; }
.topic-3 { left: 18px; top: 46px; }
.topic-4 { left: 230px; top: 46px; }
.topic-5 { left: 41px; top: 103px; }
.topic-6 { left: 203px; top: 103px; }

.pillar {
    position: absolute;
    left: 115px;
    top: 46px;
    width: 72px;
    height: 72px;
    border-radius: 50%;
    background: #040f60;
    color: #fff;
    display: flex;
    flex-direction: column;
    align-items: center;
    justify-content: center;
    gap: 2px;
    white-space: nowrap;
}

.pillar b {
    font-size: 9px;
    font-weight: 600;
}

.legend {
    margin: 7px 14px 0 18px;
    display: flex;
    justify-content: space-between;
    font-size: 8px;
    line-height: 14px;
    white-space: nowrap;
}

.legend span {
    display: flex;
    align-items: center;
    gap: 4px;
}

.swatch {
    width: 11px;
    height: 11px;
    border-radius: 3px;
}

.swatch-navy { background: #040f60; }
.swatch-green { background: #149a52; }

.panel-calendar {
    margin: 0 6px;
    padding: 8px 12px;
}

.panel-calendar table {
    width: 100%;
    margin-top: 8px;
    table-layout: fixed;
    border: 1px solid var(--line);
    border-radius: 5px;
    border-spacing: 0;
    background: #fff;
    font-size: 9px;
    text-align: center;
    white-space: nowrap;
}

.col-week { width: 9%; }
.col-topic { width: 27%; }
.col-type { width: 19%; }
.col-key { width: 27%; }
.col-date { width: 18%; }

.panel-calendar th,
.panel-calendar td {
    height: 28px;
    padding: 0;
    border-right: 1px solid var(--line);
    border-bottom: 1px solid var(--line);
    font-weight: 500;
}

.panel-calendar th {
    background: #f9faff;
    font-weight: 600;
}

.panel-calendar tr > :last-child {
    border-right: none;
}

.panel-calendar tbody tr:last-child td {
    border-bottom: none;
}

.calendar-more {
    display: block;
    margin-top: 4px;
    border: 1px solid var(--line);
    border-radius: 4px;
    background: #fff;
    color: var(--blue);
    font-size: 9px;
    line-height: 19px;
    font-weight: 500;
    text-align: center;
}

.panel-benefits {
    margin-left: 5px;
    padding: 13px 17px 0;
}

.panel-benefits .checks {
    margin-top: 8px;
    font-size: 10px;
}

.panel-benefits .checks li {
    height: 26px;
}

/* Clients */
.clients {
    height: 80px;
    margin-top: 14px;
    padding: 3px 0 0 18px;
    background: #fefeff;
    border: 1px solid #eeeffc;
    border-radius: 7px;
    box-shadow: 0 1px 5px rgba(80, 80, 220, 0.08);
}

.client-list {
    height: 50px;
    padding-left: 18px;
    display: grid;
    grid-template-columns: 119fr 174fr 126fr 147fr 110fr 133fr 143fr 116fr;
    align-items: center;
}

.client {
    display: flex;
    align-items: center;
    white-space: nowrap;
}

.mark-24 {
    width: 24px;
    height: 24px;
}

.mark-20 {
    width: 20px;
    height: 20px;
}

.client-mark {
    margin-right: 2px;
    flex-shrink: 0;
}

.vingroup {
    color: #dc0d18;
    font-size: 10px;
    font-weight: 800;
}

.vingroup .big-cap {
    font-size: 12px;
}

.tgdd {
    color: #111;
    font-size: 13px;
    font-style: italic;
    font-weight: 700;
    font-family: 'Open Sans', sans-serif;
}

.tgdd span {
    display: flex;
    flex-direction: column;
    line-height: 18px;
    padding-top: 8px;
}

.tgdd small {
    align-self: flex-end;
    font-size: 7px;
    line-height: 8px;
}

.fpt {
    width: 58px;
    height: 32px;
    fill: #fff;
    font-size: 18px;
    font-weight: 800;
    font-style: italic;
}

.viettel {
    color: #e3101c;
    font-family: 'Open Sans', sans-serif;
    font-size: 23px;
    font-weight: 700;
}

.tiki svg {
    width: 44px;
    height: 30px;
    margin-top: -4px;
}

.sendo {
    align-items: baseline;
    color: #e3101c;
    font-family: 'Open Sans', sans-serif;
    font-size: 20px;
    font-style: italic;
    font-weight: 800;
}

.sendo small {
    font-size: 11px;
}

.vinhomes {
    width: 84px;
    flex-direction: column;
    color: #222;
    font-family: 'Liberation Serif', serif;
    font-size: 14px;
    line-height: 16px;
}

.vinhomes svg {
    width: 12px;
    height: 17px;
    margin-top: -6px;
    margin-right: 8px;
}

.vinhomes .big-cap {
    font-size: 18px;
}

.baoviet {
    gap: 3px;
    color: #0a4a9c;
    font-size: 14px;
    font-weight: 800;
}

/* Mobile preview */
.mobile {
    flex: 1;
    padding: 8px 4px 9px 10px;
    background: linear-gradient(90deg, #000a2e, #00061e);
    display: flex;
}

.phone {
    position: relative;
    flex: 1;
    padding: 15px 14px 15px 13px;
    border: 3px solid #8d8d90;
    border-radius: 62px;
    background: #020203;
    box-shadow: inset 0 0 3px 2px #444, 0 0 2px #555;
    display: flex;
}

.side-key {
    position: absolute;
    left: -5px;
    width: 2px;
    height: 50px;
    background: #77777c;
}

.key-1 { top: 108px; height: 28px; }
.key-2 { top: 160px; }
.key-3 { top: 228px; }
.key-4 { top: 192px; left: auto; right: -5px; height: 76px; }

.screen {
    position: relative;
    flex: 1;
    min-width: 0;
    border-radius: 46px;
    overflow: hidden;
    background: #fff;
    display: flex;
    flex-direction: column;
}

.notch {
    position: absolute;
    left: 50%;
    top: 0;
    width: 148px;
    height: 30px;
    margin-left: -74px;
    border-radius: 0 0 20px 20px;
    background: #020203;
}

.notch::before {
    content: "";
    position: absolute;
    left: 54px;
    top: 8px;
    width: 38px;
    height: 5px;
    border-radius: 3px;
    background: #141416;
}

.notch::after {
    content: "";
    position: absolute;
    left: 103px;
    top: 7px;
    width: 8px;
    height: 8px;
    border-radius: 50%;
    background: radial-gradient(#2a37a0 25%, #0a0d24 40%);
}

.status {
    padding: 12px 16px 0 25px;
    display: flex;
    align-items: center;
    justify-content: space-between;
    color: #111;
    font-size: 12px;
    line-height: 18px;
    font-weight: 600;
}

.status svg {
    width: 52px;
    height: 12px;
}

.m-header {
    height: 54px;
    padding: 8px 14px 0 15px;
    display: flex;
    align-items: center;
    white-space: nowrap;
}

.m-menu {
    width: 16px;
    margin-right: 23px;
    padding: 0;
    background: none;
    display: flex;
    flex-direction: column;
    gap: 4px;
}

.m-menu i {
    width: 16px;
    height: 2px;
    background: #10154d;
}

.m-logo {
    width: 23px;
    height: 25px;
    margin-right: 8px;
}

.m-name {
    display: block;
    font-size: 12px;
    line-height: 15px;
    font-weight: 600;
}

.m-sub {
    display: block;
    font-size: 8px;
    line-height: 11px;
}

.m-call {
    width: 23px;
    height: 23px;
    margin-left: auto;
    padding: 0;
    border-radius: 4px;
    background: var(--blue);
    display: flex;
    align-items: center;
    justify-content: center;
}

.m-call svg {
    width: 15px;
    height: 15px;
}

.m-body {
    flex: 1;
    padding: 16px 14px 34px 15px;
    background: linear-gradient(#f9faff, #fcfcff 80%, #fff);
}

.m-body .pill {
    font-size: 9px;
}

.m-body h1 {
    margin-top: 12px;
    font-size: 18px;
    line-height: 25px;
    white-space: nowrap;
}

.m-body > p {
    margin-top: 7px;
    font-size: 10px;
    line-height: 17px;
    white-space: nowrap;
}

.m-body .checks {
    margin-top: 7px;
    font-size: 10px;
}

.m-body .checks li {
    height: 20px;
}

.m-body .btn {
    width: 100%;
    height: 30px;
}

.m-buttons {
    margin-top: 13px;
    display: flex;
    flex-direction: column;
    gap: 8px;
}

.m-stats {
    margin-top: 14px;
    background: #fff;
    border-radius: 7px;
    box-shadow: 0 1px 7px rgba(80, 80, 220, 0.09);
    display: grid;
    grid-template-columns: 1fr 1fr;
    padding-bottom: 4px;
}

.m-stat {
    height: 48px;
    padding-left: 5px;
    border-right: 1px solid #f4f5fd;
    border-bottom: 1px solid #f4f5fd;
    display: flex;
    align-items: center;
    gap: 8px;
    white-space: nowrap;
}

.m-stat:nth-child(even) {
    border-right: none;
}

.m-stat:nth-child(n+3) {
    border-bottom: none;
}

.m-stat-icon {
    width: 30px;
    height: 28px;
    border-radius: 50%;
    background: #f0f1fd;
    color: #0a22d8;
    display: flex;
    align-items: center;
    justify-content: center;
}

.m-stat-icon svg {
    width: 17px;
    height: 17px;
}

.m-stat strong {
    color: var(--blue);
    font-size: 11px;
    line-height: 14px;
    font-weight: 600;
}

.m-stat p {
    font-size: 7px;
    line-height: 14px;
}

.m-body h2 {
    margin-top: 18px;
    font-size: 11px;
    line-height: 16px;
    font-weight: 600;
    text-align: center;
}

.m-steps {
    margin-top: 4px;
    padding: 10px 12px 12px 0;
    background: #f9faff;
    display: grid;
    grid-template-columns: 1fr 20px 1fr 20px 1fr;
    row-gap: 4px;
    align-items: center;
}

.m-steps > i {
    color: #6478f5;
    font-size: 7px;
    font-style: normal;
    text-align: center;
}

.m-step {
    display: flex;
    flex-direction: column;
    align-items: center;
    text-align: center;
    font-size: 8px;
    line-height: 10px;
    font-weight: 500;
    white-space: nowrap;
}

.m-step .num {
    position: relative;
    width: 15px;
    height: 15px;
    font-size: 8px;
}

.m-step span {
    width: 30px;
    height: 30px;
    margin: -4px 0 -2px;
    border-radius: 50%;
    background: #fff;
    box-shadow: 0 1px 4px rgba(80, 80, 220, 0.1);
    display: flex;
    align-items: center;
    justify-content: center;
}

.m-step svg {
    width: 13px;
    height: 13px;
}

.m-step span:not([class]) {
    color: #0a22d8;
}

.m-results {
    margin-top: 9px;
    display: grid;
    grid-template-columns: repeat(3, 1fr);
    gap: 10px;
}

.m-result {
    height: 107px;
    padding-top: 11px;
    background: #fff;
    border-radius: 6px;
    box-shadow: 0 1px 6px rgba(80, 80, 220, 0.1);
    display: flex;
    flex-direction: column;
    align-items: center;
    text-align: center;
    white-space: nowrap;
}

.m-result strong {
    font-size: 14px;
    line-height: 18px;
    font-weight: 600;
}

.m-result p {
    margin-top: 5px;
    font-size: 8px;
    line-height: 13px;
}

.m-chart {
    width: 62px;
    height: 34px;
    margin-top: 2px;
}

.m-body .m-cta {
    height: 36px;
    margin-top: 25px;
    border-radius: 9px;
    font-size: 11px;
}
```
